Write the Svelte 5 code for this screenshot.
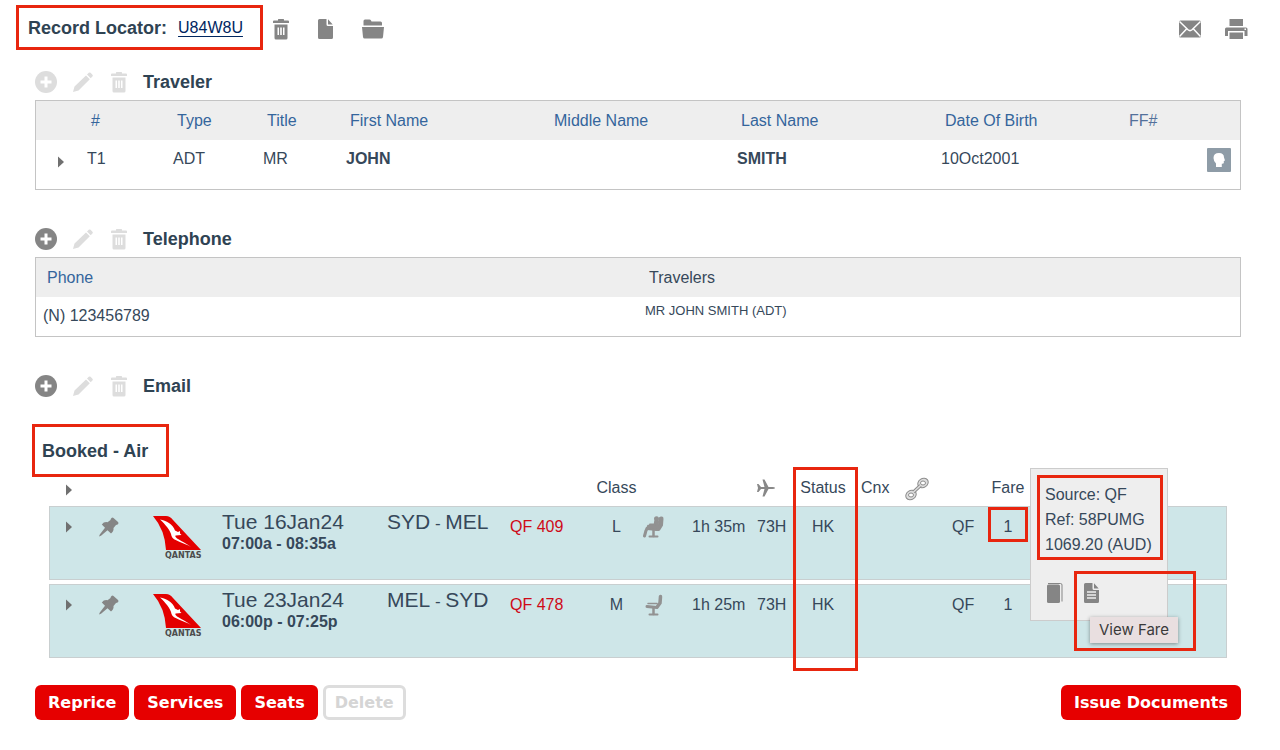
<script lang="ts">
  type Flight = {
    date: string;
    times: string;
    from: string;
    to: string;
    number: string;
    cabin: string;
    seated: boolean;
    duration: string;
    equipment: string;
    status: string;
    source: string;
    fare: number;
  };

  const flights: Flight[] = [
    {
      date: "Tue 16Jan24",
      times: "07:00a - 08:35a",
      from: "SYD",
      to: "MEL",
      number: "QF 409",
      cabin: "L",
      seated: true,
      duration: "1h 35m",
      equipment: "73H",
      status: "HK",
      source: "QF",
      fare: 1,
    },
    {
      date: "Tue 23Jan24",
      times: "06:00p - 07:25p",
      from: "MEL",
      to: "SYD",
      number: "QF 478",
      cabin: "M",
      seated: false,
      duration: "1h 25m",
      equipment: "73H",
      status: "HK",
      source: "QF",
      fare: 1,
    },
  ];

  // relative column widths
  const travelerCols = [47, 86, 90, 83, 204, 187, 204, 184, 119];
  const flightCols = [
    40, 40, 89, 165, 123, 84, 53, 45, 65, 38, 64, 46, 47, 36, 48, 195,
  ];

  function share(cols: number[], i: number) {
    return (cols[i] / cols.reduce((a, b) => a + b, 0)) * 100;
  }
</script>

{#snippet trash()}
  <svg width="16" height="22" viewBox="0 0 16 22" aria-hidden="true">
    <path
      fill="currentColor"
      fill-rule="evenodd"
      d="M5 2.500V1.600Q5 1 5.600 1h4.800q.6 0 .6.6v.9h4q1 0 1 1V5H0V3.500q0-1 1-1zM1.500 6.500h13V20q0 1.500-1.500 1.500H3Q1.500 21.500 1.500 20zM4.500 9.500v7.500h1.500V9.500zM7.200 9.500v7.500h1.600V9.500zM10 9.500v7.500h1.500V9.500z"
    />
  </svg>
{/snippet}

{#snippet arrow()}
  <svg class="arrow" width="7" height="12" viewBox="0 0 7 12" aria-hidden="true">
    <path fill="#707070" d="M0 0.500L6 6L0 11.500z" />
  </svg>
{/snippet}

{#snippet titleBar(title: string, canAdd: boolean)}
  <div class="title-bar">
    <button class="icon" class:off={!canAdd} disabled={!canAdd} aria-label="Add {title}">
      <svg width="22" height="22" viewBox="0 0 22 22" aria-hidden="true">
        <circle cx="11" cy="11" r="11" fill="currentColor" />
        <path d="M11 5.500v11M5.500 11h11" stroke="#fff" stroke-width="3" />
      </svg>
    </button>
    <button class="icon off" disabled aria-label="Edit {title}">
      <svg width="20" height="20" viewBox="0 0 20 20" aria-hidden="true">
        <path
          fill="currentColor"
          d="M0 20l1.500-5.500L13 3.500l3.800 3.800L5.500 18.500zM14 2.600L15.800.8q.9-.8 1.800 0l1.800 1.900q.9.900 0 1.700L17.700 6.300z"
        />
      </svg>
    </button>
    <button class="icon off" disabled aria-label="Delete {title}">
      {@render trash()}
    </button>
    <h2>{title}</h2>
  </div>
{/snippet}

{#snippet seat(seated: boolean)}
  <svg width="22" height="22" viewBox="0 0 22 22" aria-hidden="true">
    <g fill="none" stroke="#929292" stroke-linecap="round" stroke-linejoin="round">
      <path d="M17.500 2.500L17 9L14.500 12.500" stroke-width="3.500" />
      <path d="M4 12.500L14 13.500" stroke-width="3" />
      <path d="M5 9.500H14" stroke-width="1.500" />
      <path d="M10.500 14V20" stroke-width="2.500" />
      <path d="M6.500 20.500H14.500" stroke-width="2" />
      {#if seated}
        <path d="M13 7L12 11.500L5.500 10.500L3 14.500L1.500 20" stroke-width="3" />
        <path d="M13.500 6L13 12" stroke-width="5" />
        <path d="M7 8.500H12" stroke-width="2" />
        <path d="M18.500 2.500L18 9L15.500 13" stroke-width="4" />
      {/if}
    </g>
    {#if seated}
      <circle cx="13.500" cy="2.800" r="2.500" fill="#929292" />
    {/if}
  </svg>
{/snippet}

<main>
  <header>
    <div class="locator marked">
      <h1>Record Locator:</h1>
      <a href="#record">U84W8U</a>
    </div>
    <div class="tools">
      <button class="icon" aria-label="Cancel record">{@render trash()}</button>
      <button class="icon" aria-label="New record">
        <svg width="15" height="20" viewBox="0 0 15 20" aria-hidden="true">
          <path
            fill="currentColor"
            d="M1.500 0H8.500V5.500Q8.500 7 10 7H15V18.500Q15 20 13.500 20H1.500Q0 20 0 18.500V1.500Q0 0 1.500 0zM10 0.300L14.700 5.500H10.500Q10 5.500 10 5z"
          />
        </svg>
      </button>
      <button class="icon" aria-label="Open record">
        <svg width="22" height="20" viewBox="0 0 22 20" aria-hidden="true">
          <path
            fill="currentColor"
            d="M1.500 6.500V2Q1.500.5 3 .5H7.500Q8.500.5 9 1.500L9.500 2.500H18.500Q20 2.500 20 4V6.500zM0 8H22L21 18Q20.800 19.500 19.300 19.500H2.700Q1.200 19.500 1 18z"
          />
        </svg>
      </button>
    </div>
    <div class="tools end">
      <button class="icon" aria-label="Email itinerary">
        <svg width="22" height="18" viewBox="0 0 22 18" aria-hidden="true">
          <rect width="22" height="17" y="0.500" rx="1.500" fill="currentColor" />
          <path
            d="M0.500 1.500L9 9.800Q11 11.500 13 9.800L21.500 1.500M0.500 16.500L7.500 9M21.500 16.500L14.500 9"
            fill="none"
            stroke="#fff"
            stroke-width="1.500"
          />
        </svg>
      </button>
      <button class="icon" aria-label="Print">
        <svg width="23" height="20" viewBox="0 0 23 20" aria-hidden="true">
          <path
            fill="currentColor"
            fill-rule="evenodd"
            d="M4.500 0H18V7H4.500zM1.500 8.500H21Q22.500 8.500 22.500 10V17H19.500V12H3V17H0V10Q0 8.500 1.500 8.500zM19.500 9.500V11H21V9.500zM4.500 13.500H18V20H4.500z"
          />
        </svg>
      </button>
    </div>
  </header>

  <section>
    {@render titleBar("Traveler", false)}
    <table class="panel">
      <colgroup>
        {#each travelerCols as _, i}
          <col style="width: {share(travelerCols, i)}%" />
        {/each}
      </colgroup>
      <thead>
        <tr>
          <th></th>
          <th>#</th>
          <th>Type</th>
          <th>Title</th>
          <th>First Name</th>
          <th>Middle Name</th>
          <th>Last Name</th>
          <th>Date Of Birth</th>
          <th class="muted">FF#</th>
        </tr>
      </thead>
      <tbody>
        <tr class="traveler">
          <td class="expand">
            <button class="icon" aria-label="Expand traveler">{@render arrow()}</button>
          </td>
          <td>T1</td>
          <td>ADT</td>
          <td>MR</td>
          <td><b>JOHN</b></td>
          <td></td>
          <td><b>SMITH</b></td>
          <td>10Oct2001</td>
          <td class="profile">
            <button class="icon" aria-label="Profile">
              <svg width="24" height="24" viewBox="0 0 24 24" aria-hidden="true">
                <rect width="24" height="24" rx="1" fill="#8e9ca7" />
                <path
                  fill="#fff"
                  d="M12 5Q17 5 17 9.500L18 12.500L16.800 13V15Q16.500 16 14.800 15.800V19H9V15.500Q6.500 13 6.500 10Q6.500 5 12 5z"
                />
              </svg>
            </button>
          </td>
        </tr>
      </tbody>
    </table>
  </section>

  <section>
    {@render titleBar("Telephone", true)}
    <table class="panel phones">
      <thead>
        <tr>
          <th>Phone</th>
          <th class="plain">Travelers</th>
        </tr>
      </thead>
      <tbody>
        <tr>
          <td>(N) 123456789</td>
          <td class="small">MR JOHN SMITH (ADT)</td>
        </tr>
      </tbody>
    </table>
  </section>

  <section>
    {@render titleBar("Email", true)}
  </section>

  <section class="air">
    <h2 class="marked">Booked - Air</h2>
    <table class="flights">
      <colgroup>
        {#each flightCols as _, i}
          <col style="width: {share(flightCols, i)}%" />
        {/each}
      </colgroup>
      <thead>
        <tr>
          <th>
            <button class="icon" aria-label="Expand all">{@render arrow()}</button>
          </th>
          <th colspan="5"></th>
          <th>Class</th>
          <th colspan="2"></th>
          <th class="plane">
            <svg width="18" height="18" viewBox="0 0 18 18" role="img" aria-label="Equipment">
              <path
                fill="#888"
                d="M0 5H1.500L4 8H7.500L5.500 0.500H7.500L11.500 8H15.500Q18 8.200 18 9Q18 9.800 15.500 10H11.500L7.500 17.500H5.500L7.500 10H4L1.500 13H0L1 9z"
              />
            </svg>
          </th>
          <th>
            Status
            <span class="marked status-mark"></span>
          </th>
          <th class="left cnx">Cnx</th>
          <th class="left link">
            <svg width="24" height="24" viewBox="0 0 24 24" role="img" aria-label="Link">
              <g fill="#ddd" stroke="#8c8c8c">
                <ellipse cx="18" cy="6" rx="5.500" ry="4.500" transform="rotate(-35 18 6)" />
                <ellipse cx="6" cy="18" rx="5.500" ry="4.500" transform="rotate(-35 6 18)" />
                <path d="M8.500 15L15.500 8.500" stroke-width="3.500" />
                <path d="M8 15.500L16 8" stroke="#ddd" stroke-width="1.500" />
                <ellipse cx="18" cy="6" rx="2.500" ry="2" fill="#fff" />
                <ellipse cx="6" cy="18" rx="2.500" ry="2" fill="#fff" />
              </g>
            </svg>
          </th>
          <th></th>
          <th>Fare</th>
          <th></th>
        </tr>
      </thead>
      <tbody>
        {#each flights as flight, i}
          <tr>
            <td class="center">
              <button class="icon" aria-label="Expand {flight.number}">{@render arrow()}</button>
            </td>
            <td class="center">
              <button class="icon" aria-label="Pin {flight.number}">
                <svg width="20" height="20" viewBox="0 0 20 20" aria-hidden="true">
                  <path
                    fill="currentColor"
                    d="M12.500 1Q13.500 0 14.500 1L19 5Q20 6 19 7.200Q17.800 8 17 8L14.500 11Q15 14.200 12 16.500L8.500 13.200L2 18.800L0 19.500L.8 17.500L6 10.800L2.800 7.500Q5 4.500 8.500 5.200L11.500 3Q11.500 2 12.500 1z"
                  />
                </svg>
              </button>
            </td>
            <td class="logo">
              <svg width="56" height="46" viewBox="0 0 56 46" role="img" aria-label="Qantas">
                <path fill="#e40000" d="M0 1H13Q17 1 20 5L48 35H13Q12 15 0 1z" />
                <path
                  fill="#fff"
                  d="M7 4.500C13 5.500 20 9 22 15.500L25 17L27 16V18.500L28.500 20L22.500 20.500C21 23 28 25 38 32C30 27 20 26 18.500 21C18 16 12 9 7 4.500z"
                />
                <text x="12" y="43">QANTAS</text>
              </svg>
            </td>
            <td class="when">
              <div class="big">{flight.date}</div>
              <b>{flight.times}</b>
            </td>
            <td class="when">
              <div class="big">{flight.from}<small>&nbsp;-&nbsp;</small>{flight.to}</div>
            </td>
            <td class="number">{flight.number}</td>
            <td class="center">{flight.cabin}</td>
            <td class="seat">{@render seat(flight.seated)}</td>
            <td>{flight.duration}</td>
            <td>{flight.equipment}</td>
            <td class="center">{flight.status}</td>
            <td></td>
            <td></td>
            <td>{flight.source}</td>
            <td class="center fare">
              {flight.fare}
              {#if i === 0}
                <span class="marked fare-mark"></span>
                <div class="fare-card">
                  <div class="fare-info marked">
                    <div>Source: QF</div>
                    <div>Ref: 58PUMG</div>
                    <div>1069.20 (AUD)</div>
                  </div>
                  <div class="fare-actions">
                    <button class="icon" aria-label="Fare rules">
                      <svg width="17" height="22" viewBox="0 0 17 22" aria-hidden="true">
                        <rect x="0" y="2.500" width="13" height="18.500" rx="1.500" fill="currentColor" />
                        <path
                          d="M1 1.500H13.500Q15 1.500 15 3V19.500"
                          fill="none"
                          stroke="currentColor"
                        />
                      </svg>
                    </button>
                    <button class="icon" aria-label="View Fare">
                      <svg width="15" height="20" viewBox="0 0 15 20" aria-hidden="true">
                        <path
                          fill="currentColor"
                          d="M1.500 0H8.500V5.500Q8.500 7 10 7H15V18.500Q15 20 13.500 20H1.500Q0 20 0 18.500V1.500Q0 0 1.500 0zM10 0.300L14.700 5.500H10.500Q10 5.500 10 5z"
                        />
                        <path d="M3 9H12M3 12H12M3 15H12" stroke="#eee" stroke-width="1.500" />
                      </svg>
                    </button>
                  </div>
                  <span class="marked view-mark"></span>
                  <div class="tooltip" role="tooltip">View Fare</div>
                </div>
              {/if}
            </td>
            <td></td>
          </tr>
        {/each}
      </tbody>
    </table>
  </section>

  <footer>
    <button class="action">Reprice</button>
    <button class="action">Services</button>
    <button class="action">Seats</button>
    <button class="action" disabled>Delete</button>
    <button class="action end">Issue Documents</button>
  </footer>
</main>

<style>
  :global(body) {
    background: #fff;
  }
  main {
    padding: 5px 39px 29px 35px;
    font: 16px/20px "Liberation Sans", Arial, sans-serif;
    color: #36485a;
  }
  h1,
  h2 {
    margin: 0;
    font-size: 18px;
    line-height: 22px;
    color: #2f4353;
  }
  svg {
    display: block;
  }
  .marked {
    box-sizing: border-box;
    border: 3px solid #e8260f;
  }
  .icon {
    display: inline-block;
    padding: 0;
    border: 0;
    background: none;
    color: #858585;
    vertical-align: top;
    cursor: pointer;
  }
  .icon.off {
    color: #ddd;
    cursor: default;
  }

  header {
    display: flex;
    align-items: center;
    margin-left: -19px;
  }
  .locator {
    display: flex;
    align-items: center;
    gap: 11px;
    height: 45px;
    padding: 0 17px 0 9px;
  }
  .locator a {
    color: #00265f;
    text-underline-offset: 3px;
  }
  .tools {
    display: flex;
    align-items: center;
    gap: 29px;
    margin-left: 10px;
    padding-top: 3px;
  }
  .end {
    margin-left: auto;
  }
  .tools.end {
    gap: 24px;
    margin-right: -7px;
    margin-left: auto;
  }

  section {
    margin-top: 38px;
  }
  header + section {
    margin-top: 21px;
  }
  .title-bar {
    display: grid;
    grid-template-columns: 22px 22px 16px auto;
    column-gap: 16px;
    align-items: center;
    justify-content: start;
    height: 22px;
    margin-bottom: 7px;
  }

  table {
    table-layout: fixed;
    border-spacing: 0;
  }
  th {
    font-weight: normal;
    text-align: left;
  }
  .panel {
    width: 100%;
    border: 1px solid #c4c4c4;
  }
  .panel th {
    height: 39px;
    padding: 0 0 0 8px;
    background: #eee;
    color: #34659c;
  }
  .panel th.muted {
    color: #53719b;
  }
  .panel th.plain {
    color: #36485a;
  }
  .panel td {
    padding: 9px 0 10px 4px;
    vertical-align: top;
  }
  .panel .traveler td {
    padding-bottom: 20px;
  }
  .panel .expand {
    text-align: center;
  }
  .expand .arrow {
    margin-top: 7px;
  }
  .panel .traveler .profile {
    padding: 8px 9px 0 0;
    text-align: right;
  }
  .panel.phones th {
    padding-left: 11px;
  }
  .panel.phones td {
    padding-left: 7px;
  }
  .panel.phones .small {
    padding-top: 4px;
    font-size: 13px;
  }

  .air {
    margin-top: 27px;
  }
  .air h2 {
    width: fit-content;
    margin-left: -3px;
    padding: 13px 18px 12px 7px;
  }
  .flights {
    width: calc(100% - 28px);
    margin: -7px 14px 0;
    border-spacing: 0 4px;
  }
  .flights th {
    position: relative;
    height: 26px;
    padding: 0;
    text-align: center;
    white-space: nowrap;
  }
  .flights th .arrow {
    margin-top: 6px;
  }
  .flights th.left {
    text-align: left;
  }
  .flights th.cnx {
    padding-left: 6px;
  }
  .flights th.link {
    padding: 2px 0 0 4px;
  }
  .plane svg {
    margin: 0 auto 0 4px;
  }
  .flights td {
    height: 62px;
    padding: 10px 0 0 4px;
    border: solid #c9cfd0;
    border-width: 1px 0;
    background: #cee6e8;
    vertical-align: top;
    white-space: nowrap;
  }
  .flights td:first-child {
    border-left-width: 1px;
  }
  .flights td:last-child {
    border-right-width: 1px;
  }
  .flights .center {
    padding-left: 0;
    text-align: center;
  }
  .flights td .arrow {
    margin-top: 4px;
  }
  .flights .logo {
    padding: 8px 0 0 24px;
  }
  .logo text {
    font: bold 8px "DejaVu Sans", Verdana, sans-serif;
    fill: #4c4c4c;
  }
  .flights .when {
    padding-top: 3px;
  }
  .big {
    font-size: 21px;
    line-height: 24px;
  }
  .big small {
    font-size: 17px;
  }
  .number {
    color: #cf0a18;
  }
  .flights .seat {
    padding: 9px 0 0;
  }
  .status-mark {
    position: absolute;
    top: -7px;
    left: 2px;
    right: -3px;
    height: 204px;
  }
  .flights .fare {
    position: relative;
  }
  .fare-mark {
    position: absolute;
    top: 0;
    left: 4px;
    right: 4px;
    height: 35px;
  }
  .fare-card {
    position: absolute;
    top: -39px;
    left: 46px;
    z-index: 1;
    padding: 6px 4px 16px 6px;
    border: 1px solid #ccc;
    background: #eee;
    text-align: left;
  }
  .fare-info {
    padding: 4px 8px 0 5px;
    line-height: 25px;
  }
  .fare-actions {
    display: flex;
    align-items: center;
    gap: 20px;
    margin: 22px 0 0 10px;
  }
  .view-mark {
    position: absolute;
    top: 102px;
    left: 43px;
    width: 122px;
    height: 80px;
  }
  .tooltip {
    position: absolute;
    top: 148px;
    left: 59px;
    padding: 3px 9px;
    background: #e9dfe0;
    box-shadow: 0 1px 4px rgba(0, 0, 0, 0.4);
    color: #3a3a3a;
    font: 15px/20px Inter, sans-serif;
  }

  footer {
    display: flex;
    gap: 5px;
    margin-top: 23px;
  }
  .action {
    height: 35px;
    padding: 0 13px;
    border: 0;
    border-radius: 6px;
    background: #e60000;
    color: #fff;
    font: bold 16px "DejaVu Sans", Verdana, sans-serif;
    cursor: pointer;
  }
  .action:disabled {
    padding: 0 9px;
    border: 3px solid #ddd;
    background: #fff;
    color: #d5d5d5;
    cursor: default;
  }
</style>
